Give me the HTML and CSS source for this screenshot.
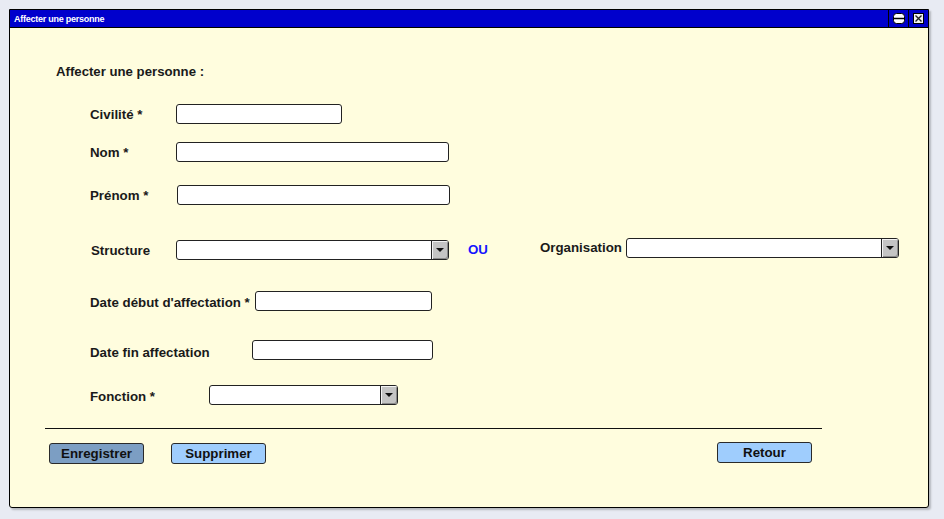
FILE: index.html
```html
<!DOCTYPE html>
<html lang="fr">
<head>
<meta charset="utf-8">
<title>Affecter une personne</title>
<link rel="stylesheet" href="styles.css">
</head>
<body>
<div class="window">
  <div class="titlebar">
    <span class="title">Affecter une personne</span>
    <div class="tb-btns">
      <span class="tb-btn">
        <svg width="12" height="11" viewBox="0 0 12 11"><rect x="0.5" y="0.5" width="11" height="10" rx="3" fill="#fff" stroke="#000"/><line x1="1" y1="5.5" x2="11" y2="5.5" stroke="#000" stroke-width="1.5"/></svg>
      </span>
      <span class="tb-btn">
        <svg width="11" height="11" viewBox="0 0 11 11"><rect x="0.5" y="0.5" width="10" height="10" fill="#f2f2f2" stroke="#000"/><path d="M2.5 2.5 L8.5 8.5 M8.5 2.5 L2.5 8.5" stroke="#222" stroke-width="1.4"/></svg>
      </span>
    </div>
  </div>
  <div class="content">
    <h1 class="heading">Affecter une personne :</h1>
    <div class="form">
      <div class="row r1">
        <label class="lbl w-civ">Civilité *</label>
        <span class="field f-civ"></span>
      </div>
      <div class="row r2">
        <label class="lbl w-nom">Nom *</label>
        <span class="field f-wide"></span>
      </div>
      <div class="row r3">
        <label class="lbl w-pre">Prénom *</label>
        <span class="field f-wide"></span>
      </div>
      <div class="row r4">
        <label class="lbl w-str">Structure</label>
        <span class="field f-wide select low"><span class="dd"><i class="tri"></i></span></span>
        <span class="ou low">OU</span>
        <label class="lbl w-org">Organisation</label>
        <span class="field f-wide select"><span class="dd"><i class="tri"></i></span></span>
      </div>
      <div class="row r5">
        <label class="lbl w-deb lbl-low">Date début d'affectation *</label>
        <span class="field f-deb"></span>
      </div>
      <div class="row r6">
        <label class="lbl w-fin lbl-lower">Date fin affectation</label>
        <span class="field f-fin"></span>
      </div>
      <div class="row r7">
        <label class="lbl w-fon lbl-low">Fonction *</label>
        <span class="field f-fon select"><span class="dd"><i class="tri"></i></span></span>
      </div>
    </div>
    <div class="sep"></div>
    <div class="actions">
      <button class="btn btn-dark">Enregistrer</button>
      <button class="btn btn-light btn-sup">Supprimer</button>
      <button class="btn btn-light btn-ret">Retour</button>
    </div>
  </div>
</div>
</body>
</html>
```
FILE: styles.css
```css
* { box-sizing: border-box; }
html, body { margin: 0; padding: 0; }
body {
  background: #e8ebf3;
  width: 944px;
  height: 519px;
  overflow: hidden;
  font-family: "Liberation Sans", Arial, sans-serif;
}
.window {
  margin: 9px 0 0 9px;
  width: 920px;
  height: 499px;
  border: 1px solid #000;
  border-radius: 0 0 3px 3px;
  background: #fffdde;
  box-shadow: 2px 2px 2px rgba(0,0,0,0.22);
  display: flex;
  flex-direction: column;
}
.titlebar {
  height: 18px;
  background: #0000cc;
  border-bottom: 1px solid #000;
  display: flex;
  align-items: center;
  justify-content: space-between;
}
.title {
  color: #fff;
  font-size: 9px;
  font-weight: bold;
  padding-left: 4px;
  letter-spacing: -0.25px;
}
.tb-btns { display: flex; height: 100%; }
.tb-btn {
  width: 20px;
  height: 100%;
  border-left: 1px solid #000;
  display: flex;
  align-items: center;
  justify-content: center;
}
.content { flex: 1; }
.heading {
  margin: 36px 0 0 46px;
  font-size: 13.2px;
  line-height: 16px;
  font-weight: bold;
  color: #1a1a1a;
}
.form { padding-left: 80px; }
.row {
  display: flex;
  align-items: center;
  height: 20px;
}
.r1 { margin-top: 24px; }
.r2 { margin-top: 18px; }
.r3 { margin-top: 23px; }
.r4 { margin-top: 33px; height: 22px; align-items: flex-start; }
.r5 { margin-top: 31px; }
.r6 { margin-top: 29px; }
.r7 { margin-top: 25px; }
.lbl {
  font-size: 13.3px;
  font-weight: bold;
  color: #1a1a1a;
  flex: none;
}
.r4 .lbl { line-height: 20px; }
.lbl-low { padding-top: 3px; }
.lbl-lower { padding-top: 5px; }
.w-civ { width: 86px; }
.w-nom { width: 86px; }
.w-pre { width: 87px; }
.w-str { width: 85px; margin-left: 1px; margin-top: 3px; }
.w-org { width: 86px; margin-left: 52px; }
.w-deb { width: 165px; }
.w-fin { width: 162px; }
.w-fon { width: 119px; }
.field {
  display: flex;
  justify-content: flex-end;
  height: 20px;
  background: #fff;
  border: 1px solid #222;
  border-radius: 3px;
  flex: none;
}
.f-civ { width: 166px; }
.f-wide { width: 273px; }
.f-deb { width: 177px; }
.f-fin { width: 181px; }
.f-fon { width: 189px; }
.low { margin-top: 2px; }
.dd {
  width: 17px;
  height: 100%;
  border-left: 1px solid #222;
  background: #c4c4c4;
  box-shadow: inset 1px 1px 0 #f4f4f4, inset -1px -1px 0 #8a8a8a;
  border-radius: 0 2px 2px 0;
  display: flex;
  align-items: center;
  justify-content: center;
}
.tri {
  width: 0;
  height: 0;
  border-left: 4px solid transparent;
  border-right: 4px solid transparent;
  border-top: 4px solid #111;
}
.ou {
  margin-left: 19px;
  font-size: 13.3px;
  font-weight: bold;
  color: #1414ff;
  line-height: 20px;
}
.sep {
  margin: 23px 0 0 35px;
  width: 777px;
  height: 1px;
  background: #111;
}
.actions {
  display: flex;
  align-items: flex-start;
  padding-left: 39px;
  margin-top: 14px;
}
.btn {
  width: 95px;
  height: 21px;
  padding: 0;
  border: 1px solid #2a2a2a;
  border-radius: 3px;
  font-family: "Liberation Sans", Arial, sans-serif;
  font-size: 13.3px;
  font-weight: bold;
  color: #111;
}
.btn-dark { background: #7c9ec3; }
.btn-light { background: #9fcdfd; }
.btn-sup { margin-left: 27px; }
.btn-ret { margin-left: 451px; margin-top: -1px; }
```
